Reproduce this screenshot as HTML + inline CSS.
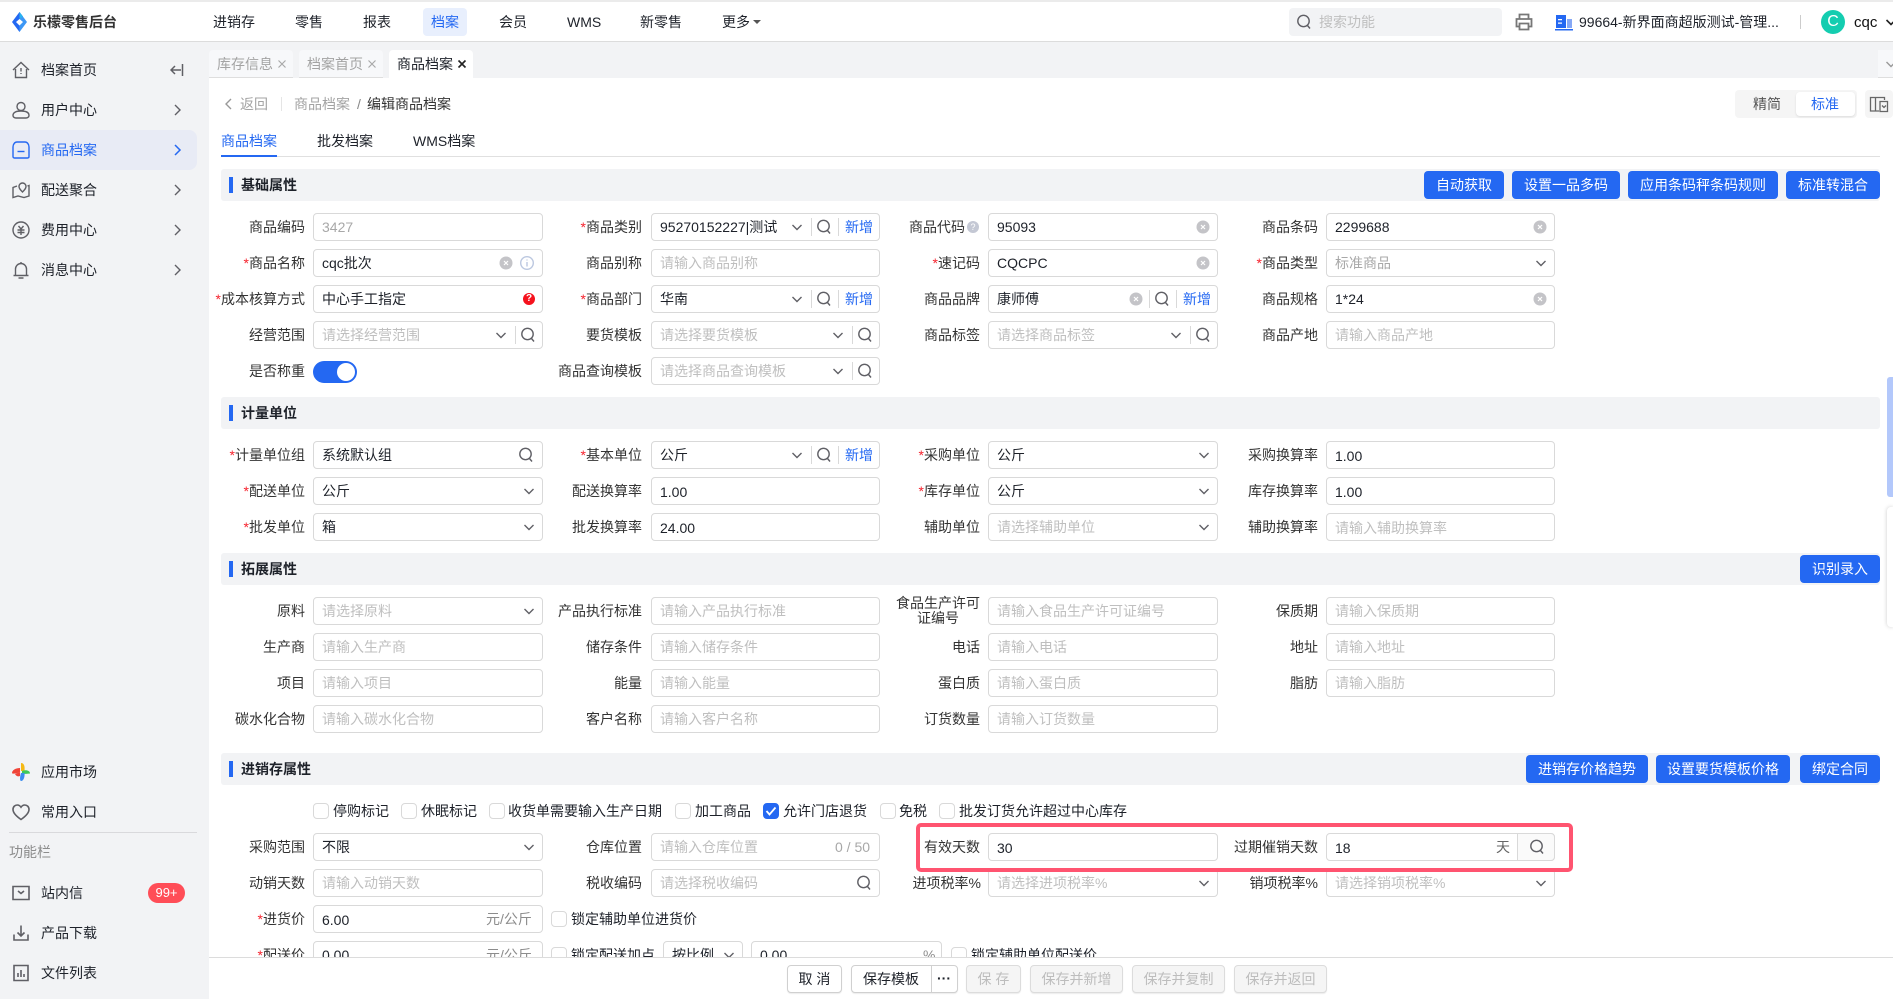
<!DOCTYPE html>
<html lang="zh">
<head>
<meta charset="utf-8">
<title>乐檬零售后台</title>
<style>
*{box-sizing:border-box}
html,body{margin:0;padding:0}
body{position:relative;width:1893px;height:999px;overflow:hidden;background:#fff;font:14px/20px "Liberation Sans","Noto Sans CJK SC",sans-serif;color:#1d2129}
.a,.t,.l,.i,.b,.s,.ck,.ct,svg.ic{position:absolute}
.t{white-space:nowrap}
svg.ic{display:block;fill:none;stroke:#5f5f65;stroke-width:1.400}
.l{width:130px;text-align:right;line-height:28px;white-space:nowrap;color:#333}
.l em{font-style:normal;color:#f5222d;font-size:14px;margin-right:0}
.l1{left:175px}.l2{left:512px}.l3{left:850px}.l4{left:1188px}
.i{height:28px;border:1px solid #d9d9d9;border-radius:4px;background:#fff;line-height:27px;padding-left:8px;white-space:nowrap;color:#1d2129}
.num{line-height:29px}
.i1{left:313px;width:230px}.i2{left:651px;width:229px}.i3{left:988px;width:230px}.i4{left:1326px;width:229px}
.p{color:#bfbfbf}.g{color:#a8a8a8}
.sec{position:absolute;left:221px;width:1659px;height:32px;background:#f2f3f5;border-radius:3px}
.sec:before{content:"";position:absolute;left:8px;top:8px;width:4px;height:16px;background:#2468f2}
.sec b{position:absolute;left:20px;top:6px;font-weight:700;color:#1d2129}
.b{height:28px;background:#2468f2;color:#fff;border-radius:4px;text-align:center;line-height:28px;white-space:nowrap}
.s{width:1px;height:18px;background:#d9d9d9}
.n{position:absolute;color:#2468f2;line-height:28px}
.ck{width:16px;height:16px;border:1px solid #d9d9d9;border-radius:4px;background:#fff;top:803px}
.ct{top:801px;white-space:nowrap;color:#1d2129}
.w{position:absolute;height:28px;top:965px;border:1px solid #d0d0d0;border-radius:4px;text-align:center;line-height:26px;background:#fff;color:#1d2129;white-space:nowrap;box-shadow:0 1px 1px rgba(0,0,0,.08)}
.d{background:#f5f5f5;color:#bdbdbd;border-color:#dcdcdc}
.side{position:absolute;left:41px;white-space:nowrap;color:#1d2129}
.nav{position:absolute;top:12px;white-space:nowrap;color:#1d2129}
</style>
</head>
<body>
<svg width="0" height="0" style="position:absolute">
<symbol id="chev" viewBox="0 0 14 14"><path d="M2.500 5l4.500 4.500L11.500 5"/></symbol>
<symbol id="right" viewBox="0 0 14 14"><path d="M5 2l5 5-5 5"/></symbol>
<symbol id="srch" viewBox="0 0 16 16"><circle cx="7.500" cy="7" r="5.700"/><path d="M11.500 11.500l2.500 3"/></symbol>
<symbol id="clr" viewBox="0 0 14 14"><circle cx="7" cy="7" r="6.500" fill="#c4c4c8" stroke="none"/><path d="M5 5l4 4M9 5l-4 4" stroke="#fff" stroke-width="1.200"/></symbol>
</svg>

<!-- top bar -->
<div class="a" style="left:0;top:0;width:1893px;height:2px;background:#ebebeb"></div>
<div class="a" style="left:0;top:41px;width:1893px;height:1px;background:#dcdcdc"></div>
<svg class="ic" style="left:12px;top:12px;stroke:none" width="15" height="20" viewBox="0 0 15 20"><path d="M7.500 0L11 4.500 7.500 7 4 10l3.500 3.500V20L0 10z" fill="#2468f2"/><path d="M7.500 0L15 10l-7.500 10v-6.500L11 10 7.500 7z" fill="#3d97f5"/><path d="M7.500 0L11 4.500 7.500 7z" fill="#28b4f0"/></svg>
<div class="t" style="left:33px;top:12px;font-weight:700;color:#333">乐檬零售后台</div>
<div class="a" style="left:423px;top:8px;width:44px;height:28px;background:#e8effd;border-radius:4px"></div>
<div class="nav" style="left:213px">进销存</div>
<div class="nav" style="left:295px">零售</div>
<div class="nav" style="left:363px">报表</div>
<div class="nav" style="left:431px;color:#2468f2">档案</div>
<div class="nav" style="left:499px">会员</div>
<div class="nav" style="left:567px">WMS</div>
<div class="nav" style="left:640px">新零售</div>
<div class="nav" style="left:722px">更多</div>
<div class="a" style="left:753px;top:20px;border:4px solid transparent;border-top:4px solid #555;border-bottom:0"></div>
<div class="a" style="left:1289px;top:8px;width:213px;height:28px;background:#f2f3f5;border-radius:4px"></div>
<svg class="ic" style="left:1296px;top:14px" width="16" height="16"><use href="#srch"/></svg>
<div class="t" style="left:1319px;top:12px;color:#bfbfbf">搜索功能</div>
<svg class="ic" style="left:1515px;top:13px;stroke:#777;stroke-width:1.800" width="18" height="18" viewBox="0 0 18 18"><path d="M4.500 6V1.500h9V6M4.500 13.500H1.500V6h15v7.500h-3"/><path d="M4.500 10.500h9v6h-9z"/></svg>
<svg class="ic" style="left:1555px;top:15px;stroke:none" width="18" height="16" viewBox="0 0 18 16"><path d="M1 0h10v13H1z" fill="#2468f2"/><path d="M12 4h5v9h-5z" fill="#86a8f5"/><path d="M0 14h18v1.500H0z" fill="#2468f2"/><path d="M3 4h4v1.300H3zM3 7.500h4v1.300H3z" fill="#fff"/></svg>
<div class="t" style="left:1579px;top:12px;color:#1d2129;width:200px;overflow:hidden;font-size:14px">99664-新界面商超版测试-管理...</div>
<div class="a" style="left:1800px;top:15px;width:1px;height:14px;background:#ccc"></div>
<div class="a" style="left:1821px;top:10px;width:24px;height:24px;border-radius:50%;background:#14cdb0;color:#fff;text-align:center;line-height:24px;font-size:16px">C</div>
<div class="t" style="left:1854px;top:13px;font-size:15px;color:#111">cqc</div>
<svg class="ic" style="left:1884px;top:15px;stroke:#222;stroke-width:1.600" width="14" height="14"><use href="#chev"/></svg>

<!-- sidebar -->
<div class="a" style="left:0;top:42px;width:209px;height:957px;background:#f2f3f5"></div>
<div class="a" style="left:0;top:130px;width:197px;height:40px;background:#e8ebf5;border-radius:0 8px 8px 0"></div>
<svg class="ic" style="left:12px;top:61px" width="18" height="18" viewBox="0 0 18 18"><path d="M1 9l8-7.500L17 9M3.500 8v8.500h11V8"/><path d="M9 7v3.500M9 12v1"/></svg>
<div class="side" style="top:60px">档案首页</div>
<svg class="ic" style="left:170px;top:63px;stroke-width:1.500" width="14" height="14" viewBox="0 0 14 14"><path d="M12.500 1v12M11 7H1M5 3L1 7l4 4"/></svg>
<svg class="ic" style="left:12px;top:101px" width="18" height="18" viewBox="0 0 18 18"><circle cx="9" cy="5.500" r="4"/><path d="M1 14.500c0-3 3-4.500 8-4.500s8 1.500 8 4.500c0 1.500-1.500 2.500-3 2.500H4c-1.500 0-3-1-3-2.500z"/></svg>
<div class="side" style="top:100px">用户中心</div>
<svg class="ic" style="left:170px;top:103px" width="14" height="14"><use href="#right"/></svg>
<svg class="ic" style="left:12px;top:141px;stroke:#2468f2;stroke-width:1.400" width="18" height="18" viewBox="0 0 18 18"><path d="M1 6c0-3 2-5 4-5h8c2 0 4 2 4 5v9.500c0 1-.5 1.500-1.500 1.500h-13c-1 0-1.500-.5-1.500-1.500z"/><path d="M5.500 10.500h7"/></svg>
<div class="side" style="top:140px;color:#2468f2">商品档案</div>
<svg class="ic" style="left:170px;top:143px;stroke:#2468f2;stroke-width:1.500" width="14" height="14"><use href="#right"/></svg>
<svg class="ic" style="left:12px;top:181px" width="18" height="18" viewBox="0 0 18 18"><path d="M5 5L1 6.500V16.500l5-1.500 6 1.500 5-1.500V4.500L15.500 5"/><path d="M10.500 11C8.500 9 7 7.500 7 5.500a3.500 3.500 0 0 1 7 0c0 2-1.500 3.500-3.500 5.500z"/></svg>
<div class="side" style="top:180px">配送聚合</div>
<svg class="ic" style="left:170px;top:183px" width="14" height="14"><use href="#right"/></svg>
<svg class="ic" style="left:12px;top:221px" width="18" height="18" viewBox="0 0 18 18"><circle cx="9" cy="9" r="8"/><path d="M6.500 5L9 8l2.500-3M5.500 9h7M5.500 11.500h7M9 8v6"/></svg>
<div class="side" style="top:220px">费用中心</div>
<svg class="ic" style="left:170px;top:223px" width="14" height="14"><use href="#right"/></svg>
<svg class="ic" style="left:12px;top:261px" width="18" height="18" viewBox="0 0 18 18"><path d="M1.500 14.500h15M3.500 14.500V8a5.500 5.500 0 0 1 11 0v6.500M6.500 17h5M9 1v1.500"/></svg>
<div class="side" style="top:260px">消息中心</div>
<svg class="ic" style="left:170px;top:263px" width="14" height="14"><use href="#right"/></svg>

<svg class="ic" style="left:12px;top:763px;stroke:none" width="18" height="18" viewBox="0 0 18 18"><path d="M9 0c3 0 4 3 3.500 8H9z" fill="#f5b915"/><path d="M10 8c4-1.500 8-.5 8 2.500 0 0-4 .5-8 .5z" fill="#3ec95a"/><path d="M9 10h3.500c.5 4-1 8-3.500 8-1 0-1.500-3 0-8z" fill="#3c8cf0"/><path d="M8 5C4 5 0 7 0 10c0 1 4 1 8-1z" fill="#f04438"/><path d="M8 9v4c-2 1-4 0-5-2z" fill="#f04438"/></svg>
<div class="side" style="top:762px">应用市场</div>
<svg class="ic" style="left:12px;top:803px;stroke-width:1.600" width="18" height="18" viewBox="0 0 18 18"><path d="M9 16.500C4 13 1 10 1 6.500 1 3.500 3.200 2 5.200 2 6.900 2 8.200 3 9 4.200 9.800 3 11.100 2 12.800 2c2 0 4.200 1.500 4.200 4.500 0 3.500-3 6.500-8 10z"/></svg>
<div class="side" style="top:802px">常用入口</div>
<div class="a" style="left:9px;top:832px;width:188px;height:1px;background:#d9d9dc"></div>
<div class="t" style="left:9px;top:842px;color:#8c8c8c">功能栏</div>
<svg class="ic" style="left:12px;top:884px;stroke-width:1.600" width="18" height="18" viewBox="0 0 18 18"><path d="M1 2.500h16v13H1z"/><path d="M6 7l3 2.500L12 7"/></svg>
<div class="side" style="top:883px">站内信</div>
<div class="a" style="left:148px;top:883px;width:37px;height:20px;border-radius:10px;background:#ff4d57;color:#fff;text-align:center;line-height:20px;font-size:13px">99+</div>
<svg class="ic" style="left:12px;top:924px;stroke-width:1.600" width="18" height="18" viewBox="0 0 18 18"><path d="M2 10.500v5.500h14v-5.500M9 1.500v10M5.500 8.500L9 12l3.500-3.500"/></svg>
<div class="side" style="top:923px">产品下载</div>
<svg class="ic" style="left:12px;top:964px;stroke-width:1.600" width="18" height="18" viewBox="0 0 18 18"><path d="M2 1.500h14v15H2zM6 13V9M9 13V6M12 13v-3"/></svg>
<div class="side" style="top:963px">文件列表</div>

<!-- tab strip -->
<div class="a" style="left:209px;top:42px;width:1684px;height:36px;background:#f2f3f5"></div>
<div class="a" style="left:209px;top:50px;width:84px;height:28px;background:#f7f8fa;border-radius:4px 4px 0 0;border-bottom:1px solid #dedede"></div>
<div class="a" style="left:299px;top:50px;width:84px;height:28px;background:#f7f8fa;border-radius:4px 4px 0 0;border-bottom:1px solid #dedede"></div>
<div class="a" style="left:389px;top:50px;width:84px;height:28px;background:#fff;border-radius:4px 4px 0 0"></div>
<div class="t" style="left:217px;top:54px;color:#a3a3a3">库存信息</div>
<svg class="ic" style="left:277px;top:59px;stroke:#aaa;stroke-width:1.200" width="10" height="10" viewBox="0 0 10 10"><path d="M1.500 1.500l7 7M8.500 1.500l-7 7"/></svg>
<div class="t" style="left:307px;top:54px;color:#a3a3a3">档案首页</div>
<svg class="ic" style="left:367px;top:59px;stroke:#aaa;stroke-width:1.200" width="10" height="10" viewBox="0 0 10 10"><path d="M1.500 1.500l7 7M8.500 1.500l-7 7"/></svg>
<div class="t" style="left:397px;top:54px">商品档案</div>
<svg class="ic" style="left:457px;top:59px;stroke:#222;stroke-width:1.600" width="10" height="10" viewBox="0 0 10 10"><path d="M1.500 1.500l7 7M8.500 1.500l-7 7"/></svg>
<div class="a" style="left:1878px;top:50px;width:15px;height:28px;background:#f7f8fa;border-bottom:1px solid #dedede"></div>
<svg class="ic" style="left:1884px;top:57px;stroke:#999" width="14" height="14"><use href="#chev"/></svg>

<!-- breadcrumb -->
<svg class="ic" style="left:222px;top:97px;stroke:#999" width="14" height="14" viewBox="0 0 14 14"><path d="M9 2L4 7l5 5"/></svg>
<div class="t" style="left:240px;top:94px;color:#a3a3a3">返回</div>
<div class="a" style="left:281px;top:97px;width:1px;height:14px;background:#e5e5e5"></div>
<div class="t" style="left:294px;top:94px;color:#a3a3a3">商品档案</div>
<div class="t" style="left:357px;top:94px;color:#888">/</div>
<div class="t" style="left:367px;top:94px;color:#333">编辑商品档案</div>
<div class="a" style="left:1735px;top:90px;width:122px;height:28px;background:#f5f5f5;border-radius:4px"></div>
<div class="a" style="left:1796px;top:92px;width:59px;height:24px;background:#fff;border-radius:4px;box-shadow:0 1px 2px rgba(0,0,0,.1)"></div>
<div class="t" style="left:1753px;top:94px;color:#555">精简</div>
<div class="t" style="left:1811px;top:94px;color:#2468f2">标准</div>
<div class="a" style="left:1865px;top:90px;width:28px;height:28px;background:#f5f5f5;border-radius:4px"></div>
<svg class="ic" style="left:1869px;top:96px;stroke:#666;stroke-width:1.300" width="20" height="17" viewBox="0 0 20 17"><path d="M10 15H1.500V1.500h14V4M6.500 1.500V15"/><path d="M11 5.500h7.500v10H11zM13 9.500l2 2 2-2"/></svg>

<!-- inner tabs -->
<div class="t" style="left:221px;top:131px;color:#2468f2">商品档案</div>
<div class="t" style="left:317px;top:131px">批发档案</div>
<div class="t" style="left:413px;top:131px">WMS档案</div>
<div class="a" style="left:221px;top:156px;width:1659px;height:1px;background:#e0e0e0"></div>
<div class="a" style="left:221px;top:155px;width:56px;height:2px;background:#2468f2"></div>

<!-- SECTION 1 -->
<div class="sec" style="top:169px"><b>基础属性</b></div>
<div class="b" style="left:1424px;top:171px;width:80px">自动获取</div>
<div class="b" style="left:1512px;top:171px;width:108px">设置一品多码</div>
<div class="b" style="left:1628px;top:171px;width:150px">应用条码秤条码规则</div>
<div class="b" style="left:1786px;top:171px;width:94px">标准转混合</div>

<!-- row 213 -->
<div class="l l1" style="top:213px">商品编码</div><div class="i i1 g" style="top:213px">3427</div>
<div class="l l2" style="top:213px"><em>*</em>商品类别</div><div class="i i2" style="top:213px">95270152227|测试</div>
<svg class="ic" style="left:790px;top:220px" width="14" height="14"><use href="#chev"/></svg><div class="s" style="left:811px;top:218px"></div>
<svg class="ic" style="left:816px;top:219px" width="16" height="16"><use href="#srch"/></svg><div class="s" style="left:838px;top:218px"></div><div class="n" style="left:845px;top:213px">新增</div>
<div class="l l3" style="top:213px;padding-right:15px">商品代码</div>
<div class="a" style="left:967px;top:221px;width:12px;height:12px;border-radius:50%;background:#c4c8d4;color:#fff;font-size:9px;line-height:12px;text-align:center">?</div>
<div class="i i3" style="top:213px">95093</div>
<svg class="ic" style="left:1196px;top:220px;stroke:none" width="14" height="14"><use href="#clr"/></svg>
<div class="l l4" style="top:213px">商品条码</div><div class="i i4" style="top:213px">2299688</div>
<svg class="ic" style="left:1533px;top:220px" width="14" height="14"><use href="#clr"/></svg>

<!-- row 249 -->
<div class="l l1" style="top:249px"><em>*</em>商品名称</div><div class="i i1" style="top:249px">cqc批次</div>
<svg class="ic" style="left:499px;top:256px" width="14" height="14"><use href="#clr"/></svg>
<svg class="ic" style="left:520px;top:256px;stroke:#bcc8e0" width="14" height="14" viewBox="0 0 14 14"><circle cx="7" cy="7" r="6.300"/><path d="M7 6v4.500M7 3.500v1"/></svg>
<div class="l l2" style="top:249px">商品别称</div><div class="i i2 p" style="top:249px">请输入商品别称</div>
<div class="l l3" style="top:249px"><em>*</em>速记码</div><div class="i i3" style="top:249px">CQCPC</div>
<svg class="ic" style="left:1196px;top:256px" width="14" height="14"><use href="#clr"/></svg>
<div class="l l4" style="top:249px"><em>*</em>商品类型</div><div class="i i4 g" style="top:249px">标准商品</div>
<svg class="ic" style="left:1534px;top:256px" width="14" height="14"><use href="#chev"/></svg>

<!-- row 285 -->
<div class="l l1" style="top:285px"><em>*</em>成本核算方式</div><div class="i i1" style="top:285px">中心手工指定</div>
<div class="a" style="left:523px;top:293px;width:12px;height:12px;border-radius:50%;background:#f5121d;color:#fff;font-size:10px;line-height:12px;text-align:center;font-weight:700">?</div>
<div class="l l2" style="top:285px"><em>*</em>商品部门</div><div class="i i2" style="top:285px">华南</div>
<svg class="ic" style="left:790px;top:292px" width="14" height="14"><use href="#chev"/></svg><div class="s" style="left:811px;top:290px"></div>
<svg class="ic" style="left:816px;top:291px" width="16" height="16"><use href="#srch"/></svg><div class="s" style="left:838px;top:290px"></div><div class="n" style="left:845px;top:285px">新增</div>
<div class="l l3" style="top:285px">商品品牌</div><div class="i i3" style="top:285px">康师傅</div>
<svg class="ic" style="left:1129px;top:292px" width="14" height="14"><use href="#clr"/></svg><div class="s" style="left:1149px;top:290px"></div>
<svg class="ic" style="left:1154px;top:291px" width="16" height="16"><use href="#srch"/></svg><div class="s" style="left:1176px;top:290px"></div><div class="n" style="left:1183px;top:285px">新增</div>
<div class="l l4" style="top:285px">商品规格</div><div class="i i4" style="top:285px">1*24</div>
<svg class="ic" style="left:1533px;top:292px" width="14" height="14"><use href="#clr"/></svg>

<!-- row 321 -->
<div class="l l1" style="top:321px">经营范围</div><div class="i i1 p" style="top:321px">请选择经营范围</div>
<svg class="ic" style="left:494px;top:328px" width="14" height="14"><use href="#chev"/></svg><div class="s" style="left:515px;top:326px"></div>
<svg class="ic" style="left:520px;top:327px" width="16" height="16"><use href="#srch"/></svg>
<div class="l l2" style="top:321px">要货模板</div><div class="i i2 p" style="top:321px">请选择要货模板</div>
<svg class="ic" style="left:831px;top:328px" width="14" height="14"><use href="#chev"/></svg><div class="s" style="left:852px;top:326px"></div>
<svg class="ic" style="left:857px;top:327px" width="16" height="16"><use href="#srch"/></svg>
<div class="l l3" style="top:321px">商品标签</div><div class="i i3 p" style="top:321px">请选择商品标签</div>
<svg class="ic" style="left:1169px;top:328px" width="14" height="14"><use href="#chev"/></svg><div class="s" style="left:1190px;top:326px"></div>
<svg class="ic" style="left:1195px;top:327px" width="16" height="16"><use href="#srch"/></svg>
<div class="l l4" style="top:321px">商品产地</div><div class="i i4 p" style="top:321px">请输入商品产地</div>

<!-- row 357 -->
<div class="l l1" style="top:357px">是否称重</div>
<div class="a" style="left:313px;top:361px;width:44px;height:22px;border-radius:11px;background:#2468f2"></div>
<div class="a" style="left:337px;top:363px;width:18px;height:18px;border-radius:50%;background:#fff"></div>
<div class="l l2" style="top:357px">商品查询模板</div><div class="i i2 p" style="top:357px">请选择商品查询模板</div>
<svg class="ic" style="left:831px;top:364px" width="14" height="14"><use href="#chev"/></svg><div class="s" style="left:852px;top:362px"></div>
<svg class="ic" style="left:857px;top:363px" width="16" height="16"><use href="#srch"/></svg>

<!-- SECTION 2 -->
<div class="sec" style="top:397px"><b>计量单位</b></div>
<div class="l l1" style="top:441px"><em>*</em>计量单位组</div><div class="i i1" style="top:441px">系统默认组</div>
<svg class="ic" style="left:518px;top:447px" width="16" height="16"><use href="#srch"/></svg>
<div class="l l2" style="top:441px"><em>*</em>基本单位</div><div class="i i2" style="top:441px">公斤</div>
<svg class="ic" style="left:790px;top:448px" width="14" height="14"><use href="#chev"/></svg><div class="s" style="left:811px;top:446px"></div>
<svg class="ic" style="left:816px;top:447px" width="16" height="16"><use href="#srch"/></svg><div class="s" style="left:838px;top:446px"></div><div class="n" style="left:845px;top:441px">新增</div>
<div class="l l3" style="top:441px"><em>*</em>采购单位</div><div class="i i3" style="top:441px">公斤</div>
<svg class="ic" style="left:1197px;top:448px" width="14" height="14"><use href="#chev"/></svg>
<div class="l l4" style="top:441px">采购换算率</div><div class="i i4 num" style="top:441px">1.00</div>

<div class="l l1" style="top:477px"><em>*</em>配送单位</div><div class="i i1" style="top:477px">公斤</div>
<svg class="ic" style="left:522px;top:484px" width="14" height="14"><use href="#chev"/></svg>
<div class="l l2" style="top:477px">配送换算率</div><div class="i i2 num" style="top:477px">1.00</div>
<div class="l l3" style="top:477px"><em>*</em>库存单位</div><div class="i i3" style="top:477px">公斤</div>
<svg class="ic" style="left:1197px;top:484px" width="14" height="14"><use href="#chev"/></svg>
<div class="l l4" style="top:477px">库存换算率</div><div class="i i4 num" style="top:477px">1.00</div>

<div class="l l1" style="top:513px"><em>*</em>批发单位</div><div class="i i1" style="top:513px">箱</div>
<svg class="ic" style="left:522px;top:520px" width="14" height="14"><use href="#chev"/></svg>
<div class="l l2" style="top:513px">批发换算率</div><div class="i i2 num" style="top:513px">24.00</div>
<div class="l l3" style="top:513px">辅助单位</div><div class="i i3 p" style="top:513px">请选择辅助单位</div>
<svg class="ic" style="left:1197px;top:520px" width="14" height="14"><use href="#chev"/></svg>
<div class="l l4" style="top:513px">辅助换算率</div><div class="i i4 p num" style="top:513px">请输入辅助换算率</div>

<!-- SECTION 3 -->
<div class="sec" style="top:553px"><b>拓展属性</b></div>
<div class="b" style="left:1800px;top:555px;width:80px">识别录入</div>
<div class="l l1" style="top:597px">原料</div><div class="i i1 p" style="top:597px">请选择原料</div>
<svg class="ic" style="left:522px;top:604px" width="14" height="14"><use href="#chev"/></svg>
<div class="l l2" style="top:597px">产品执行标准</div><div class="i i2 p" style="top:597px">请输入产品执行标准</div>
<div class="a" style="left:896px;top:596px;width:84px;text-align:center;line-height:15px;color:#333">食品生产许可<br>证编号</div>
<div class="i i3 p" style="top:597px">请输入食品生产许可证编号</div>
<div class="l l4" style="top:597px">保质期</div><div class="i i4 p" style="top:597px">请输入保质期</div>

<div class="l l1" style="top:633px">生产商</div><div class="i i1 p" style="top:633px">请输入生产商</div>
<div class="l l2" style="top:633px">储存条件</div><div class="i i2 p" style="top:633px">请输入储存条件</div>
<div class="l l3" style="top:633px">电话</div><div class="i i3 p" style="top:633px">请输入电话</div>
<div class="l l4" style="top:633px">地址</div><div class="i i4 p" style="top:633px">请输入地址</div>

<div class="l l1" style="top:669px">项目</div><div class="i i1 p" style="top:669px">请输入项目</div>
<div class="l l2" style="top:669px">能量</div><div class="i i2 p" style="top:669px">请输入能量</div>
<div class="l l3" style="top:669px">蛋白质</div><div class="i i3 p" style="top:669px">请输入蛋白质</div>
<div class="l l4" style="top:669px">脂肪</div><div class="i i4 p" style="top:669px">请输入脂肪</div>

<div class="l l1" style="top:705px">碳水化合物</div><div class="i i1 p" style="top:705px">请输入碳水化合物</div>
<div class="l l2" style="top:705px">客户名称</div><div class="i i2 p" style="top:705px">请输入客户名称</div>
<div class="l l3" style="top:705px">订货数量</div><div class="i i3 p" style="top:705px">请输入订货数量</div>

<!-- SECTION 4 -->
<div class="sec" style="top:753px"><b>进销存属性</b></div>
<div class="b" style="left:1526px;top:755px;width:122px">进销存价格趋势</div>
<div class="b" style="left:1656px;top:755px;width:134px">设置要货模板价格</div>
<div class="b" style="left:1800px;top:755px;width:80px">绑定合同</div>

<div class="ck" style="left:313px"></div><div class="ct" style="left:333px">停购标记</div>
<div class="ck" style="left:401px"></div><div class="ct" style="left:421px">休眠标记</div>
<div class="ck" style="left:489px"></div><div class="ct" style="left:508px">收货单需要输入生产日期</div>
<div class="ck" style="left:675px"></div><div class="ct" style="left:695px">加工商品</div>
<div class="ck" style="left:763px;background:#2468f2;border-color:#2468f2"></div>
<svg class="ic" style="left:763px;top:803px;stroke:#fff;stroke-width:1.800" width="16" height="16" viewBox="0 0 16 16"><path d="M3.500 8l3 3.500 6-7"/></svg>
<div class="ct" style="left:783px">允许门店退货</div>
<div class="ck" style="left:880px"></div><div class="ct" style="left:899px">免税</div>
<div class="ck" style="left:939px"></div><div class="ct" style="left:959px">批发订货允许超过中心库存</div>

<!-- row 833 -->
<div class="l l1" style="top:833px">采购范围</div><div class="i i1" style="top:833px">不限</div>
<svg class="ic" style="left:522px;top:840px" width="14" height="14"><use href="#chev"/></svg>
<div class="l l2" style="top:833px">仓库位置</div><div class="i i2 p" style="top:833px">请输入仓库位置</div>
<div class="t" style="left:835px;top:837px;color:#a8a8a8">0 / 50</div>
<div class="l l3" style="top:833px">有效天数</div><div class="i i3 num" style="top:833px">30</div>
<div class="l l4" style="top:833px">过期催销天数</div><div class="i i4 num" style="top:833px">18</div>
<div class="t" style="left:1496px;top:837px;color:#666">天</div>
<div class="a" style="left:1517px;top:833px;width:38px;height:28px;background:#fafafa;border:1px solid #d9d9d9;border-radius:0 4px 4px 0"></div>
<svg class="ic" style="left:1529px;top:839px" width="16" height="16"><use href="#srch"/></svg>

<!-- row 869 -->
<div class="l l1" style="top:869px">动销天数</div><div class="i i1 p" style="top:869px">请输入动销天数</div>
<div class="l l2" style="top:869px">税收编码</div><div class="i i2 p" style="top:869px">请选择税收编码</div>
<svg class="ic" style="left:856px;top:875px" width="16" height="16"><use href="#srch"/></svg>
<div class="l l3" style="top:869px;left:851px">进项税率%</div><div class="i i3 p" style="top:869px">请选择进项税率%</div>
<svg class="ic" style="left:1197px;top:876px" width="14" height="14"><use href="#chev"/></svg>
<div class="l l4" style="top:869px">销项税率%</div><div class="i i4 p" style="top:869px">请选择销项税率%</div>
<svg class="ic" style="left:1534px;top:876px" width="14" height="14"><use href="#chev"/></svg>

<!-- red highlight -->
<div class="a" style="left:916px;top:823px;width:657px;height:49px;border:4px solid #ff5470;border-radius:5px"></div>

<!-- row 905 -->
<div class="l l1" style="top:905px"><em>*</em>进货价</div><div class="i i1 num" style="top:905px">6.00</div>
<div class="t" style="left:486px;top:909px;color:#8c8c8c">元/公斤</div>
<div class="ck" style="left:551px;top:911px"></div><div class="ct" style="left:571px;top:909px">锁定辅助单位进货价</div>

<!-- row 941 (clipped by footer) -->
<div class="l l1" style="top:941px"><em>*</em>配送价</div><div class="i i1" style="top:941px">0.00</div>
<div class="t" style="left:486px;top:945px;color:#8c8c8c">元/公斤</div>
<div class="ck" style="left:551px;top:947px"></div><div class="ct" style="left:571px;top:945px">锁定配送加点</div>
<div class="i" style="left:663px;top:941px;width:80px">按比例</div>
<svg class="ic" style="left:722px;top:948px" width="14" height="14"><use href="#chev"/></svg>
<div class="i" style="left:751px;top:941px;width:191px">0.00</div>
<div class="t" style="left:923px;top:945px;color:#8c8c8c">%</div>
<div class="ck" style="left:951px;top:947px"></div><div class="ct" style="left:971px;top:945px">锁定辅助单位配送价</div>

<!-- footer -->
<div class="a" style="left:209px;top:957px;width:1684px;height:42px;background:#fff;border-top:1px solid #dcdcdc"></div>
<div class="w" style="left:787px;width:55px">取 消</div>
<div class="w" style="left:851px;width:107px;text-align:left;padding-left:11px">保存模板</div>
<div class="a" style="left:931px;top:965px;width:1px;height:28px;background:#d0d0d0"></div>
<div class="t" style="left:937px;top:972px;font-weight:700;letter-spacing:0;line-height:12px">···</div>
<div class="w d" style="left:966px;width:55px">保 存</div>
<div class="w d" style="left:1030px;width:93px">保存并新增</div>
<div class="w d" style="left:1132px;width:93px">保存并复制</div>
<div class="w d" style="left:1234px;width:93px">保存并返回</div>

<!-- right edge widgets -->
<div class="a" style="left:1887px;top:377px;width:6px;height:120px;background:#b3c8fb;border-radius:3px 0 0 3px"></div>
<div class="a" style="left:1887px;top:507px;width:6px;height:120px;background:#fff;border-radius:4px 0 0 4px;box-shadow:0 0 4px rgba(0,0,0,.2)"></div>
</body>
</html>
